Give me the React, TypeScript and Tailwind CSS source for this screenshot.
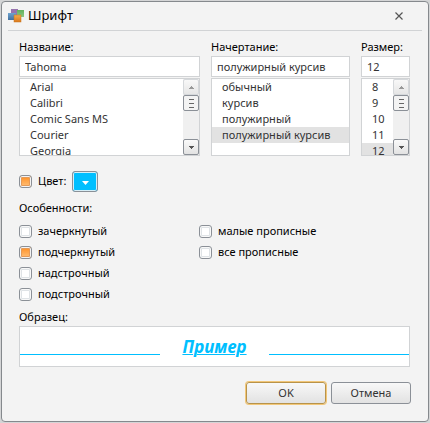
import { useState } from "react";
import clsx from "clsx";

const fonts = ["Arial", "Calibri", "Comic Sans MS", "Courier", "Georgia"];
const fontStyles = ["обычный", "курсив", "полужирный", "полужирный курсив"];
const sizes = ["8", "9", "10", "11", "12"];

function AppLogo() {
  return (
    <svg width="16" height="14" viewBox="0 0 16 14" aria-hidden="true">
      <defs>
        <linearGradient id="blue" x1="0" y1="0" x2="0" y2="1">
          <stop offset="0" stopColor="#6ea3cf" />
          <stop offset="1" stopColor="#42719f" />
        </linearGradient>
        <linearGradient id="green" x1="0" y1="0" x2="0" y2="1">
          <stop offset="0" stopColor="#62b05c" />
          <stop offset="1" stopColor="#8cc985" />
        </linearGradient>
        <linearGradient id="orange" x1="0" y1="0" x2="0" y2="1">
          <stop offset="0" stopColor="#f3ab4c" />
          <stop offset="1" stopColor="#d9781c" />
        </linearGradient>
      </defs>
      <rect x="3" y="0" width="7" height="6" fill="#9673ae" />
      <rect x="9" y="1" width="7" height="7" fill="url(#green)" />
      <rect x="0" y="4" width="8" height="7" fill="url(#blue)" />
      <rect x="6" y="6" width="7" height="7" fill="url(#orange)" stroke="#c8751f" strokeWidth="0.5" />
    </svg>
  );
}

function Arrow({ up = false, color }: { up?: boolean; color: string }) {
  return (
    <svg width="5" height="3" viewBox="0 0 5 3" shapeRendering="crispEdges" aria-hidden="true">
      <path d={up ? "M2 0h1v1h1v1h1v1H0V2h1V1h1z" : "M0 0h5v1H4v1H3v1H2V2H1V1H0z"} fill={color} />
    </svg>
  );
}

function ScrollBar() {
  return (
    <div className="flex w-4 shrink-0 flex-col bg-[#f0f0f0]">
      <button
        aria-label="Вверх"
        className="flex h-4 shrink-0 items-center justify-center rounded-xs border border-[#d5d8db] bg-linear-to-b from-[#f8f8f8] to-[#e6e6e6]"
      >
        <Arrow up color="#999999" />
      </button>
      <div className="flex h-4 shrink-0 flex-col items-center justify-center gap-[3px] rounded-xs border border-[#8b9097] bg-[#f3f3f3]">
        <span className="h-px w-[5px] bg-[#666666]"></span>
        <span className="h-px w-[5px] bg-[#666666]"></span>
        <span className="h-px w-[5px] bg-[#666666]"></span>
      </div>
      <button
        aria-label="Вниз"
        className="mt-auto flex h-4 shrink-0 items-center justify-center rounded-xs border border-[#8b9097] bg-linear-to-b from-[#fafafa] to-[#e2e2e2]"
      >
        <Arrow color="#555555" />
      </button>
    </div>
  );
}

type PickerProps = {
  id: string;
  label: string;
  items: string[];
  value: string;
  onChange: (value: string) => void;
  scroll?: boolean;
};

function Picker({ id, label, items, value, onChange, scroll }: PickerProps) {
  return (
    <div className="flex min-w-0 flex-col gap-px">
      <label htmlFor={id} className="leading-4 whitespace-nowrap">
        {label}
      </label>
      <input
        id={id}
        type="text"
        value={value}
        onChange={(e) => onChange(e.target.value)}
        className="h-[21px] w-full border border-[#d1d3d5] bg-white px-[5px] text-[#333333] focus:outline-none"
      />
      <div className="flex h-[78px] border border-[#d1d3d5] bg-white text-[#333333]">
        <ul role="listbox" aria-label={label} className="min-w-0 flex-1 overflow-hidden">
          {items.map((item) => (
            <li
              key={item}
              role="option"
              aria-selected={item === value}
              onClick={() => onChange(item)}
              className={clsx(
                "h-4 pl-[10px] leading-4 whitespace-nowrap",
                item === value && "bg-[#e2e2e2]"
              )}
            >
              {item}
            </li>
          ))}
        </ul>
        {scroll ? <ScrollBar /> : ""}
      </div>
    </div>
  );
}

function Check({ label, defaultChecked = false }: { label: string; defaultChecked?: boolean }) {
  return (
    <label className="flex h-[21px] items-center gap-[6px]">
      <input
        type="checkbox"
        defaultChecked={defaultChecked}
        className="size-[13px] shrink-0 appearance-none rounded-[3px] border border-[#8b9097] bg-white shadow-[inset_0_0_0_1px_#f8f8f8,inset_0_0_0_2px_#dfe3e6] checked:bg-linear-to-b checked:from-[#ff8c00] checked:to-[#ffc278] checked:shadow-[inset_0_0_0_1px_#f3f3f3,inset_0_0_0_2px_#e59a58]"
      />
      {label}
    </label>
  );
}

function App() {
  const [font, setFont] = useState("Tahoma");
  const [fontStyle, setFontStyle] = useState("полужирный курсив");
  const [size, setSize] = useState("12");

  return (
    <div className="min-h-screen bg-[#d4d5d6] p-px font-['Noto_Sans',sans-serif] text-[11px] text-black">
      <div
        role="dialog"
        aria-labelledby="title"
        className="rounded border border-[#85898d] bg-[#f3f3f3]"
      >
        <header className="mx-[6px] flex h-[29px] items-center gap-1 border-b border-[#d1d3d5]">
          <AppLogo />
          <h1 id="title" className="text-[13px]">
            Шрифт
          </h1>
          <button aria-label="Закрыть" className="mr-[19px] ml-auto">
            <svg width="8" height="8" viewBox="0 0 8 8" aria-hidden="true">
              <path d="M0.5 0.5l7 7M7.5 0.5l-7 7" stroke="#555555" strokeWidth="1.2" />
            </svg>
          </button>
        </header>

        <div className="flex flex-col pt-2 pr-[17px] pb-[17px] pl-[17px]">
          <div className="mr-px grid grid-cols-[181fr_139fr_49fr] gap-[11px]">
            <Picker id="font" label="Название:" items={fonts} value={font} onChange={setFont} scroll />
            <Picker id="style" label="Начертание:" items={fontStyles} value={fontStyle} onChange={setFontStyle} />
            <Picker id="size" label="Размер:" items={sizes} value={size} onChange={setSize} scroll />
          </div>

          <div className="mt-[15px] flex items-center gap-[6px]">
            <Check label="Цвет:" defaultChecked />
            <button
              aria-label="Выбрать цвет"
              className="flex h-[21px] w-[26px] items-center justify-center rounded-[3px] border border-[#8b9097] bg-[#00bfff] inset-ring inset-ring-[#d5eef7]"
            >
              <svg width="7" height="4" viewBox="0 0 7 4" className="mt-[3px]" aria-hidden="true">
                <path d="M0 0h7L3.5 4z" fill="#ffffff" />
              </svg>
            </button>
          </div>

          <fieldset className="mt-2">
            <legend className="leading-4">Особенности:</legend>
            <div className="mt-[5px] grid grid-cols-[180fr_212fr]">
              <div>
                <Check label="зачеркнутый" />
                <Check label="подчеркнутый" defaultChecked />
                <Check label="надстрочный" />
                <Check label="подстрочный" />
              </div>
              <div>
                <Check label="малые прописные" />
                <Check label="все прописные" />
              </div>
            </div>
          </fieldset>

          <h2 className="mt-1 leading-4">Образец:</h2>
          <div className="mt-px mr-px grid h-[41px] grid-cols-[140fr_109fr_140fr] items-center border border-[#d1d3d5] bg-white text-[#00bfff]">
            <span className="mt-4 h-px bg-[#00bfff]"></span>
            <span className="text-center text-[17px] leading-5 font-bold italic underline decoration-1 underline-offset-1">
              Пример
            </span>
            <span className="mt-4 h-px bg-[#00bfff]"></span>
          </div>

          <div className="mt-[15px] flex justify-end gap-[5px] text-[#333333]">
            <button className="h-[22px] w-20 rounded-[3px] border border-[#b8934a] bg-linear-to-b from-[#f8f8f8] to-[#e2e2e2] ring ring-[#f2c779]">
              OK
            </button>
            <button className="h-[22px] w-20 rounded-[3px] border border-[#8b9097] bg-linear-to-b from-[#f8f8f8] to-[#e2e2e2]">
              Отмена
            </button>
          </div>
        </div>
      </div>
    </div>
  );
}

export default App;
